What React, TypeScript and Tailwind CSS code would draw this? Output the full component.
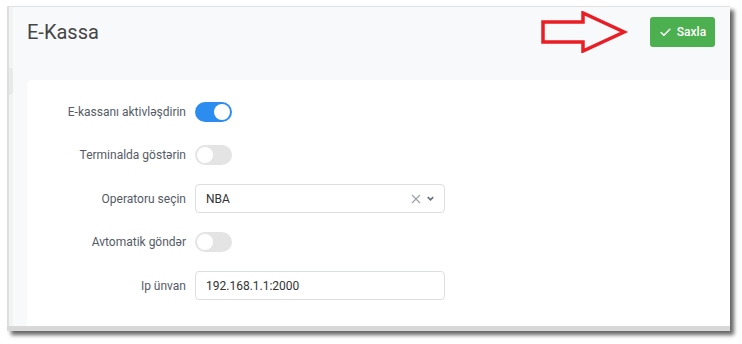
import React from "react";

const font = { fontFamily: "Roboto, 'Liberation Sans', sans-serif" };

function Toggle({ on }: { on: boolean }) {
  return (
    <div
      className={`relative h-[20px] w-[37px] rounded-full ${on ? "bg-[#2d8cf0]" : "bg-[#e4e4e4]"}`}
    >
      <div
        className={`absolute top-[2px] h-[16px] w-[16px] rounded-full bg-white ${on ? "left-[19px]" : "left-[2px]"}`}
      />
    </div>
  );
}

function Row({ label, children }: { label: string; children: React.ReactNode }) {
  return (
    <div className="flex h-[29px] items-center">
      <div className="w-[159px] text-right text-[12px] text-[#555b66]">{label}</div>
      <div className="ml-[9px] flex items-center">{children}</div>
    </div>
  );
}

export default function App() {
  return (
    <div className="h-[344px] w-[742px] bg-white pl-[7px] pt-[6px]" style={font}>
      <div className="flex h-[325px] w-[723px] flex-col border-t border-[#e2e2e2] bg-[#f8f9fa] shadow-[4px_4px_4px_rgba(0,0,0,0.6)]">
        <div className="flex min-h-0 flex-1">
          <div className="flex w-[6px] flex-col border-l-2 border-[#dedede] bg-[#f3f3f4]">
            <div className="mt-[61px] h-[27px] w-[4px] rounded-r-[3px] bg-[#e9e9ea]" />
          </div>
          <div className="flex min-w-0 flex-1 flex-col pl-[14px]">
            <div className="flex h-[73px] items-start justify-between pr-[15px] pt-[10px]">
              <div className="text-[20px] leading-[30px] text-[#464646]">E-Kassa</div>
              <div className="flex items-start">
                <svg width="90" height="42" viewBox="0 0 90 42" className="mr-[21px] mt-[-6px]">
                  <polygon
                    points="4,11 44,11 44,2 85,21 44,40 44,31 4,31"
                    fill="none"
                    stroke="#ea1c24"
                    strokeWidth="3.5"
                    strokeLinejoin="miter"
                  />
                </svg>
                <button className="flex h-[30px] w-[65px] items-center justify-center gap-[5px] rounded-[3px] bg-[#4caf50] text-[12px] font-medium text-white">
                  <svg width="13" height="13" viewBox="0 0 24 24" fill="none" stroke="white" strokeWidth="2.8" strokeLinecap="round" strokeLinejoin="round">
                    <path d="M20 6 9 17l-5-5" />
                  </svg>
                  Saxla
                </button>
              </div>
            </div>
            <div className="flex-1 rounded-tl-[5px] bg-white pt-[17px]">
              <div className="flex flex-col gap-[14.5px]">
                <Row label="E-kassanı aktivləşdirin">
                  <Toggle on />
                </Row>
                <Row label="Terminalda göstərin">
                  <Toggle on={false} />
                </Row>
                <Row label="Operatoru seçin">
                  <div className="flex h-[29px] w-[250px] items-center justify-between rounded-[4px] border border-[#dcdee2] pl-[10px] pr-[9px] text-[12px] text-[#333]">
                    <span>NBA</span>
                    <div className="flex items-center gap-[5px]">
                      <svg width="10" height="10" viewBox="0 0 10 10" stroke="#9aa0a8" strokeWidth="1.1">
                        <path d="M1 1 9 9M9 1 1 9" />
                      </svg>
                      <svg width="9" height="9" viewBox="0 0 10 10" fill="none" stroke="#6b7280" strokeWidth="2">
                        <path d="M2 3.5 5 6.5 8 3.5" />
                      </svg>
                    </div>
                  </div>
                </Row>
                <Row label="Avtomatik göndər">
                  <Toggle on={false} />
                </Row>
                <Row label="Ip ünvan">
                  <div className="flex h-[29px] w-[250px] items-center rounded-[4px] border border-[#dcdee2] pl-[10px] text-[12px] text-[#333]">
                    192.168.1.1:2000
                  </div>
                </Row>
              </div>
            </div>
          </div>
        </div>
        <div className="h-[5px] bg-[#d8d8d8]" />
      </div>
    </div>
  );
}
